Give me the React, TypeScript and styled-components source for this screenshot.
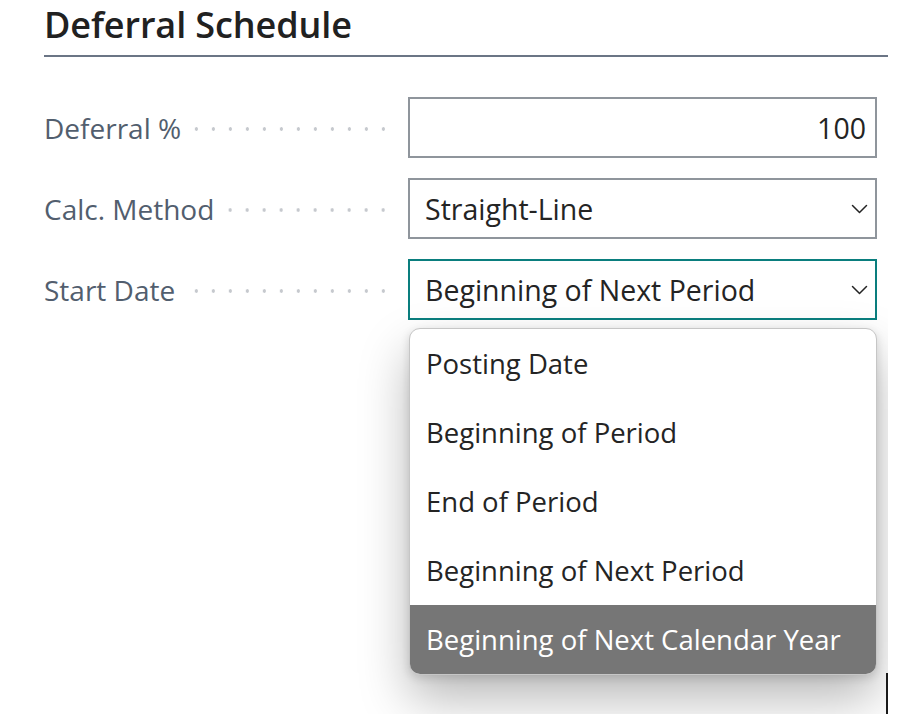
import { createGlobalStyle, styled } from 'styled-components';

const GlobalStyle = createGlobalStyle`
    html, body {
        margin: 0;
        padding: 0;
        background: #ffffff;
    }
    body {
        font-family: "Open Sans", "Noto Sans", "Liberation Sans", sans-serif;
    }
`;

const Page = styled.div`
    width: 888px;
    height: 714px;
    overflow: hidden;
    box-sizing: border-box;
    padding: 0 0 0 44px;
    position: relative;
`;

const Title = styled.h1`
    margin: 0;
    padding-top: 3px;
    height: 57px;
    box-sizing: border-box;
    font-size: 36px;
    line-height: 44px;
    font-weight: 600;
    color: #212121;
    letter-spacing: -0.1px;
    border-bottom: 2px solid #6b7585;
`;

const Form = styled.div`
    display: grid;
    grid-template-columns: 348px 469px;
    column-gap: 16px;
    row-gap: 20px;
    margin-top: 40px;
`;

const Label = styled.div`
    display: flex;
    align-items: center;
    gap: 12px;
    font-size: 28px;
    color: #525e6e;
    white-space: nowrap;
`;

const Leader = styled.span`
    flex: 1;
    height: 6px;
    margin-top: 3px;
    background-image: radial-gradient(circle, #c6c9ce 1.5px, transparent 2px);
    background-size: 17px 6px;
    background-position: right center;
    background-repeat: repeat-x;
`;

const FieldCell = styled.div`
    position: relative;
`;

const Box = styled.div<{ $focused?: boolean; $align?: 'left' | 'right' }>`
    height: 61px;
    box-sizing: border-box;
    display: flex;
    align-items: center;
    justify-content: ${(p) => (p.$align === 'right' ? 'flex-end' : 'space-between')};
    padding: 0 ${(p) => (p.$align === 'right' ? '9px' : '7px')} 0 15px;
    border: 2px solid ${(p) => (p.$focused ? '#0a7e7e' : '#8f959c')};
    background: #ffffff;
    font-size: 28.5px;
    color: #242424;
    white-space: nowrap;
`;

const Chevron = styled.svg`
    width: 17px;
    height: 11px;
    flex-shrink: 0;
`;

const Menu = styled.ul`
    position: absolute;
    top: calc(100% + 8px);
    left: 1px;
    right: 0;
    margin: 0;
    padding: 0;
    list-style: none;
    background: #ffffff;
    border: 1px solid #c6c6c6;
    border-radius: 11px;
    overflow: hidden;
    box-shadow: 0 24px 50px rgba(0, 0, 0, 0.28), 0 3px 10px rgba(0, 0, 0, 0.14);
    z-index: 2;
`;

const Option = styled.li<{ $selected?: boolean }>`
    height: 69px;
    display: flex;
    align-items: center;
    padding-left: 16px;
    font-size: 27.5px;
    white-space: nowrap;
    color: ${(p) => (p.$selected ? '#ffffff' : '#242424')};
    background: ${(p) => (p.$selected ? '#767676' : 'transparent')};
`;

const Caret = styled.span`
    position: absolute;
    left: 886px;
    top: 673px;
    width: 2px;
    height: 42px;
    background: #1a1a1a;
    z-index: 3;
`;

function ChevronDown() {
    return (
        <Chevron viewBox="0 0 17 11" fill="none">
            <path d="M1.5 2.5l7 7 7-7" stroke="#242424" strokeWidth="1.5" strokeLinecap="round" strokeLinejoin="round" />
        </Chevron>
    );
}

const OPTIONS = [
    'Posting Date',
    'Beginning of Period',
    'End of Period',
    'Beginning of Next Period',
    'Beginning of Next Calendar Year',
];

export default function App() {
    return (
        <>
            <GlobalStyle />
            <Page>
                <Title>Deferral Schedule</Title>
                <Form>
                    <Label>
                        Deferral %
                        <Leader />
                    </Label>
                    <FieldCell>
                        <Box $align="right">100</Box>
                    </FieldCell>

                    <Label>
                        Calc. Method
                        <Leader />
                    </Label>
                    <FieldCell>
                        <Box>
                            Straight-Line
                            <ChevronDown />
                        </Box>
                    </FieldCell>

                    <Label>
                        Start Date
                        <Leader />
                    </Label>
                    <FieldCell>
                        <Box $focused>
                            Beginning of Next Period
                            <ChevronDown />
                        </Box>
                        <Menu>
                            {OPTIONS.map((o, i) => (
                                <Option key={o} $selected={i === OPTIONS.length - 1}>
                                    {o}
                                </Option>
                            ))}
                        </Menu>
                    </FieldCell>
                </Form>
                <Caret />
            </Page>
        </>
    );
}
